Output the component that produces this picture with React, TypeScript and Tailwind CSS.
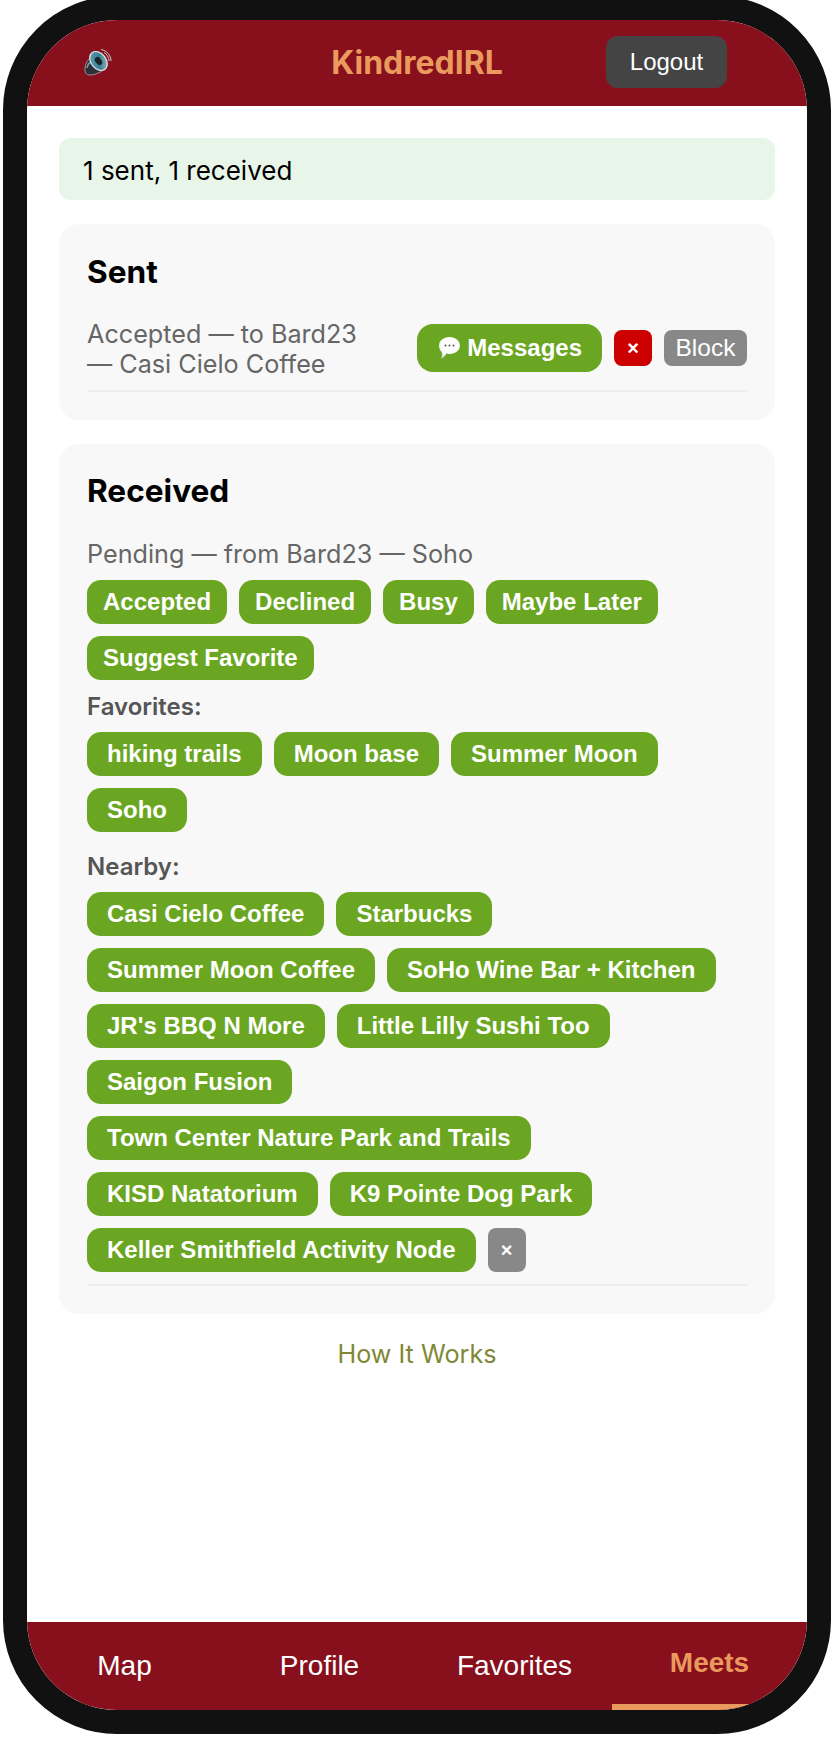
const pill =
  "mr-3 h-11 rounded-[14px] bg-[#6aa621] px-5 text-[24px] font-bold text-white whitespace-nowrap";
const pillTight =
  "mr-3 h-11 rounded-[14px] bg-[#6aa621] px-4 text-[24px] font-bold text-white whitespace-nowrap";

const favorites = ["hiking trails", "Moon base", "Summer Moon", "Soho"];
const nearby = [
  "Casi Cielo Coffee",
  "Starbucks",
  "Summer Moon Coffee",
  "SoHo Wine Bar + Kitchen",
  "JR's BBQ N More",
  "Little Lilly Sushi Too",
  "Saigon Fusion",
  "Town Center Nature Park and Trails",
  "KISD Natatorium",
  "K9 Pointe Dog Park",
];

function SpeakerIcon() {
  return (
    <svg width="28" height="28" viewBox="0 0 28 28">
      <defs>
        <linearGradient id="cone" x1="0" y1="0" x2="1" y2="1">
          <stop offset="0" stopColor="#5fa3b5" />
          <stop offset="0.55" stopColor="#3f7f92" />
          <stop offset="1" stopColor="#a9c4cc" />
        </linearGradient>
      </defs>
      <path d="M17 1.5 C23 2.5 27 7.5 27 13" fill="none" stroke="#c3c9cd" strokeWidth="1" />
      <path d="M20 4.5 C23 6 25 9.5 25 13" fill="none" stroke="#c3c9cd" strokeWidth="1" />
      {/* back of the cone */}
      <path d="M8 9 L21 20 C19 23 12 27 6 27 C2 27 0.5 24 1 20 C1.5 15 4 11 8 9 Z" fill="#2c3237" stroke="#aab1b6" strokeWidth="0.8" />
      <path d="M3 20 C3.5 17 5 15 7 14" fill="none" stroke="#8d969c" strokeWidth="1.4" />
      {/* rim and cone */}
      <ellipse cx="14.5" cy="13" rx="7.5" ry="10.5" transform="rotate(-38 14.5 13)" fill="url(#cone)" stroke="#dfe5e8" strokeWidth="1.2" />
      <ellipse cx="14.5" cy="13" rx="3" ry="4.5" transform="rotate(-38 14.5 13)" fill="#16242c" />
    </svg>
  );
}

function BubbleIcon() {
  return (
    <svg width="24" height="24" viewBox="0 0 24 24" className="mr-[6px]">
      <defs>
        <radialGradient id="bubble" cx="0.5" cy="0.4" r="0.65">
          <stop offset="0.6" stopColor="#ffffff" />
          <stop offset="1" stopColor="#cfcfcf" />
        </radialGradient>
      </defs>
      <path d="M12.5 1 C18.5 1 23 4.6 23 9.5 C23 14.4 18.5 18 12.5 18 C11.4 18 10.4 17.9 9.4 17.6 C8.4 19.6 6.6 21.6 4 23 C5 20.8 5.2 18.6 4.8 16 C2.8 14.4 2 12 2 9.5 C2 4.6 6.5 1 12.5 1 Z" fill="url(#bubble)" />
      <circle cx="8.5" cy="9.5" r="1" fill="#555" />
      <circle cx="12.5" cy="9.5" r="1" fill="#555" />
      <circle cx="16.5" cy="9.5" r="1" fill="#555" />
    </svg>
  );
}

export default function App() {
  return (
    <div className="h-[1737px] overflow-hidden bg-white font-['Inter',sans-serif]">
      <div className="mx-auto -mt-1 flex h-[1738px] w-[828px] flex-col overflow-hidden rounded-[114px] border-[24px] border-[#111111] bg-white">
        {/* header */}
        <header className="grid h-[86px] shrink-0 grid-cols-[1fr_auto_1fr] items-center bg-[#88101d] px-[57px]">
          <div className="mb-[2px]">
            <SpeakerIcon />
          </div>
          <h1 className="text-[32px] font-bold text-[#e99a5c]">KindredIRL</h1>
          <button className="mb-[2px] mr-[23px] h-[52px] w-[121px] justify-self-end rounded-[12px] bg-[#444444] font-['Liberation_Sans',sans-serif] text-[24px] text-white">
            Logout
          </button>
        </header>

        <main className="flex flex-1 flex-col px-8 pt-8">
          <div className="flex h-[62px] items-center rounded-[12px] bg-[#e8f5e9] px-6 pt-[3px] text-[26px] text-black">
            1 sent, 1 received
          </div>

          {/* sent */}
          <section className="mt-6 rounded-[20px] bg-[#f8f8f8] px-7 pb-7 pt-[26px]">
            <h2 className="text-[31.6px] font-bold leading-[44px] text-black">Sent</h2>
            <div className="mt-[25px] flex items-center justify-between border-b-2 border-[#eeeeee] pb-[11px]">
              <p className="w-[290px] text-[25.2px] leading-[30px] text-[#666666]">
                Accepted — to Bard23 — Casi Cielo Coffee
              </p>
              <div className="mb-[2px] flex items-center gap-3 font-['Liberation_Sans',sans-serif]">
                <button className="flex h-12 items-center rounded-[16px] bg-[#6aa621] px-5 text-[24px] font-bold text-white">
                  <BubbleIcon />
                  Messages
                </button>
                <button className="h-9 w-[38px] rounded-[8px] bg-[#cc0000] text-[20px] font-bold text-white">×</button>
                <button className="h-9 w-[83px] rounded-[8px] bg-[#888888] text-[24.5px] text-white">Block</button>
              </div>
            </div>
          </section>

          {/* received */}
          <section className="mt-6 rounded-[20px] bg-[#f8f8f8] px-7 pb-7 pt-[25px]">
            <h2 className="text-[31.6px] font-bold leading-[44px] text-black">Received</h2>
            <p className="mt-[26px] text-[25.2px] leading-[30px] text-[#666666]">Pending — from Bard23 — Soho</p>
            <div className="mt-[11px] flex flex-wrap gap-y-[12px] font-['Liberation_Sans',sans-serif]">
              {["Accepted", "Declined", "Busy", "Maybe Later", "Suggest Favorite"].map((label) => (
                <button key={label} className={pillTight}>{label}</button>
              ))}
            </div>
            <p className="mt-3 text-[24px] font-semibold leading-[30px] text-[#555555]">Favorites:</p>
            <div className="mt-[10px] flex flex-wrap gap-y-[12px] font-['Liberation_Sans',sans-serif]">
              {favorites.map((label) => (
                <button key={label} className={pill}>{label}</button>
              ))}
            </div>
            <p className="mt-5 text-[24px] font-semibold leading-[30px] text-[#555555]">Nearby:</p>
            <div className="mt-[10px] flex flex-wrap gap-y-[12px] border-b-2 border-[#eeeeee] pb-3 font-['Liberation_Sans',sans-serif]">
              {nearby.map((label) => (
                <button key={label} className={pill}>{label}</button>
              ))}
              <button className={pill}>Keller Smithfield Activity Node</button>
              <button className="h-11 w-[38px] rounded-[8px] bg-[#888888] text-[20px] font-bold text-white">×</button>
            </div>
          </section>

          <a className="mt-[25px] block text-center text-[25.2px] leading-[30px] text-[#808836]">How It Works</a>
        </main>

        {/* bottom nav */}
        <nav className="grid h-[88px] shrink-0 grid-cols-4 bg-[#88101d] font-['Liberation_Sans',sans-serif] text-[28px] text-white">
          <button>Map</button>
          <button>Profile</button>
          <button>Favorites</button>
          <button className="border-b-[6px] border-[#e99a5c] font-bold text-[#e99a5c]">Meets</button>
        </nav>
      </div>
    </div>
  );
}
